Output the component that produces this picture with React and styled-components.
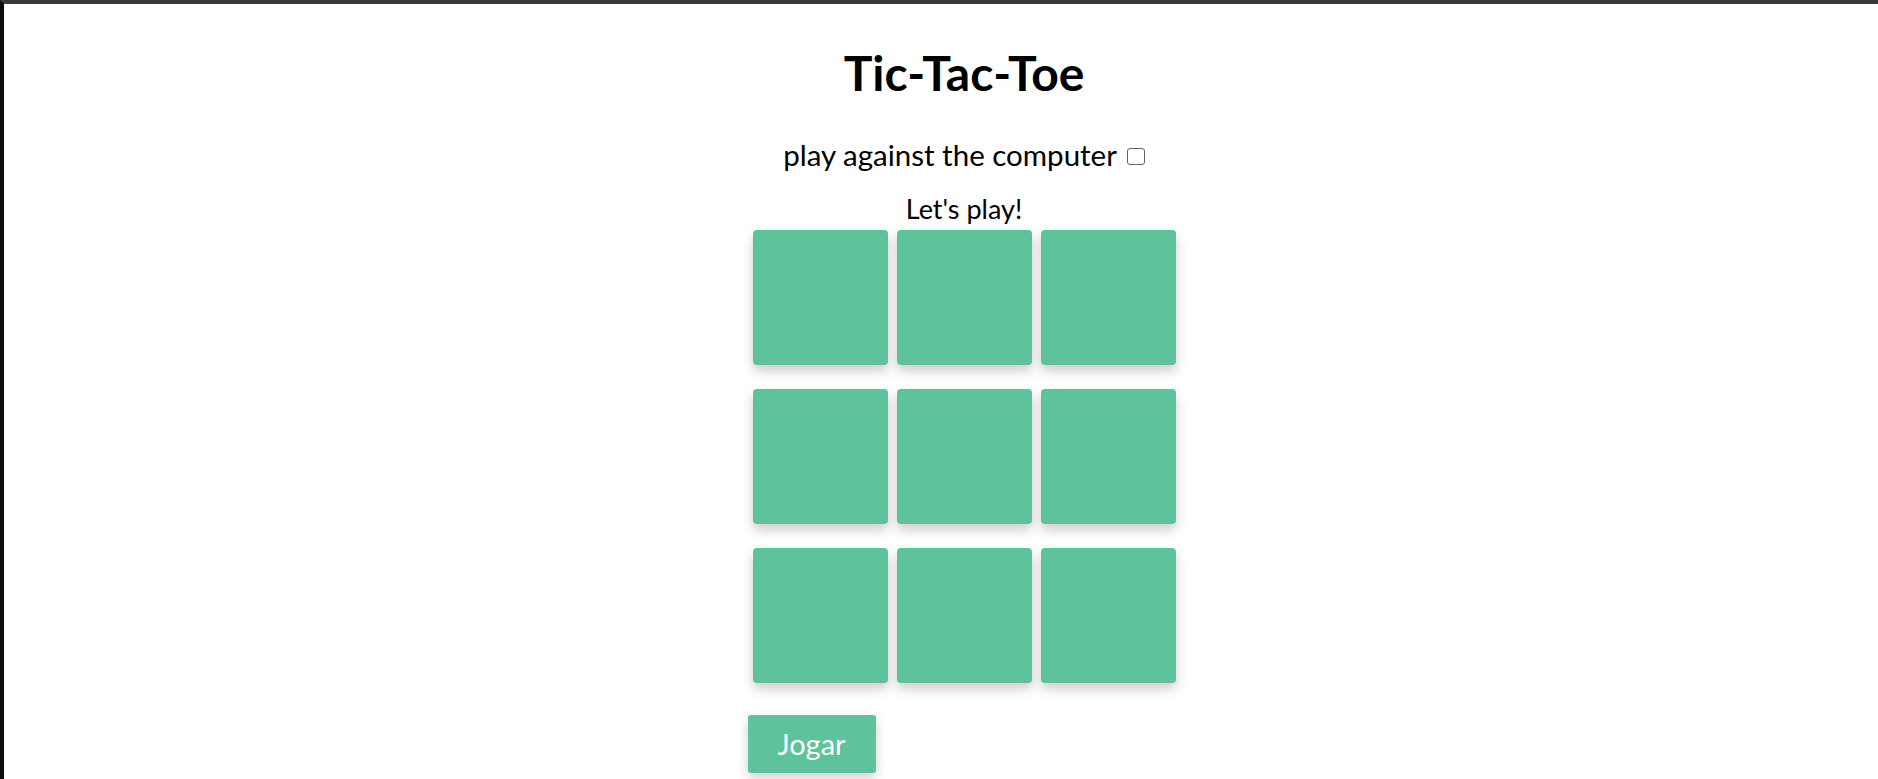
import styled, { createGlobalStyle } from "styled-components"

const GlobalStyle = createGlobalStyle`
    html, body {
        margin: 0;
        padding: 0;
        background: #ffffff;
        overflow: hidden;
    }
    body {
        font-family: Lato, "Noto Sans", sans-serif;
        color: #000;
    }
`

const Frame = styled.div`
    height: 779px;
    box-sizing: border-box;
    border-top: 4px solid #3a3a3c;
    border-left: 4px solid #0c0c0c;
    overflow: hidden;
`

const Page = styled.div`
    width: 1920px;
    display: flex;
    flex-direction: column;
    align-items: center;
`

const Title = styled.h1`
    font-size: 48px;
    font-weight: 700;
    line-height: 59px;
    margin: 39px 0 0 0;
`

const Option = styled.label`
    display: block;
    font-size: 29.5px;
    line-height: 35px;
    margin-top: 35px;
`

const Check = styled.input`
    appearance: none;
    -webkit-appearance: none;
    box-sizing: border-box;
    width: 18px;
    height: 17px;
    margin: 0 0 1px 3px;
    vertical-align: baseline;
    border: 1.5px solid #60646a;
    border-radius: 3px;
    background: #ffffff;
`

const Status = styled.p`
    font-size: 27px;
    line-height: 32px;
    margin: 21px 0 0 0;
`

const Board = styled.div`
    width: 433px;
    display: flex;
    flex-direction: column;
    align-items: flex-start;
`

const Grid = styled.div`
    display: grid;
    grid-template-columns: repeat(3, 135px);
    grid-auto-rows: 135px;
    column-gap: 9px;
    row-gap: 24px;
    margin: 5px auto 0 auto;
`

const Cell = styled.button`
    border: none;
    padding: 0;
    background-color: #5ec29b;
    border-radius: 4px;
    box-shadow: 0 6px 12px rgba(0, 0, 0, 0.2);
    cursor: pointer;
`

const PlayButton = styled.button`
    margin-top: 32px;
    padding: 11px 30px 12px 30px;
    border: none;
    border-radius: 3px;
    background-color: #5ec29b;
    color: #ffffff;
    font-family: Lato, "Noto Sans", sans-serif;
    font-size: 29px;
    line-height: 35px;
    box-shadow: 0 5px 12px rgba(0, 0, 0, 0.18);
    cursor: pointer;
`

const App = () => {
  const cells = Array.from({ length: 9 }, (_, i) => i)
  return (
    <Frame>
        <GlobalStyle/>
        <Page>
            <Title>Tic-Tac-Toe</Title>
            <Option>
                play against the computer <Check type="checkbox"/>
            </Option>
            <Status>Let's play!</Status>
            <Board>
                <Grid>
                    {cells.map(i => <Cell key={i}/>)}
                </Grid>
                <PlayButton>Jogar</PlayButton>
            </Board>
        </Page>
    </Frame>
  )
}

export default App
